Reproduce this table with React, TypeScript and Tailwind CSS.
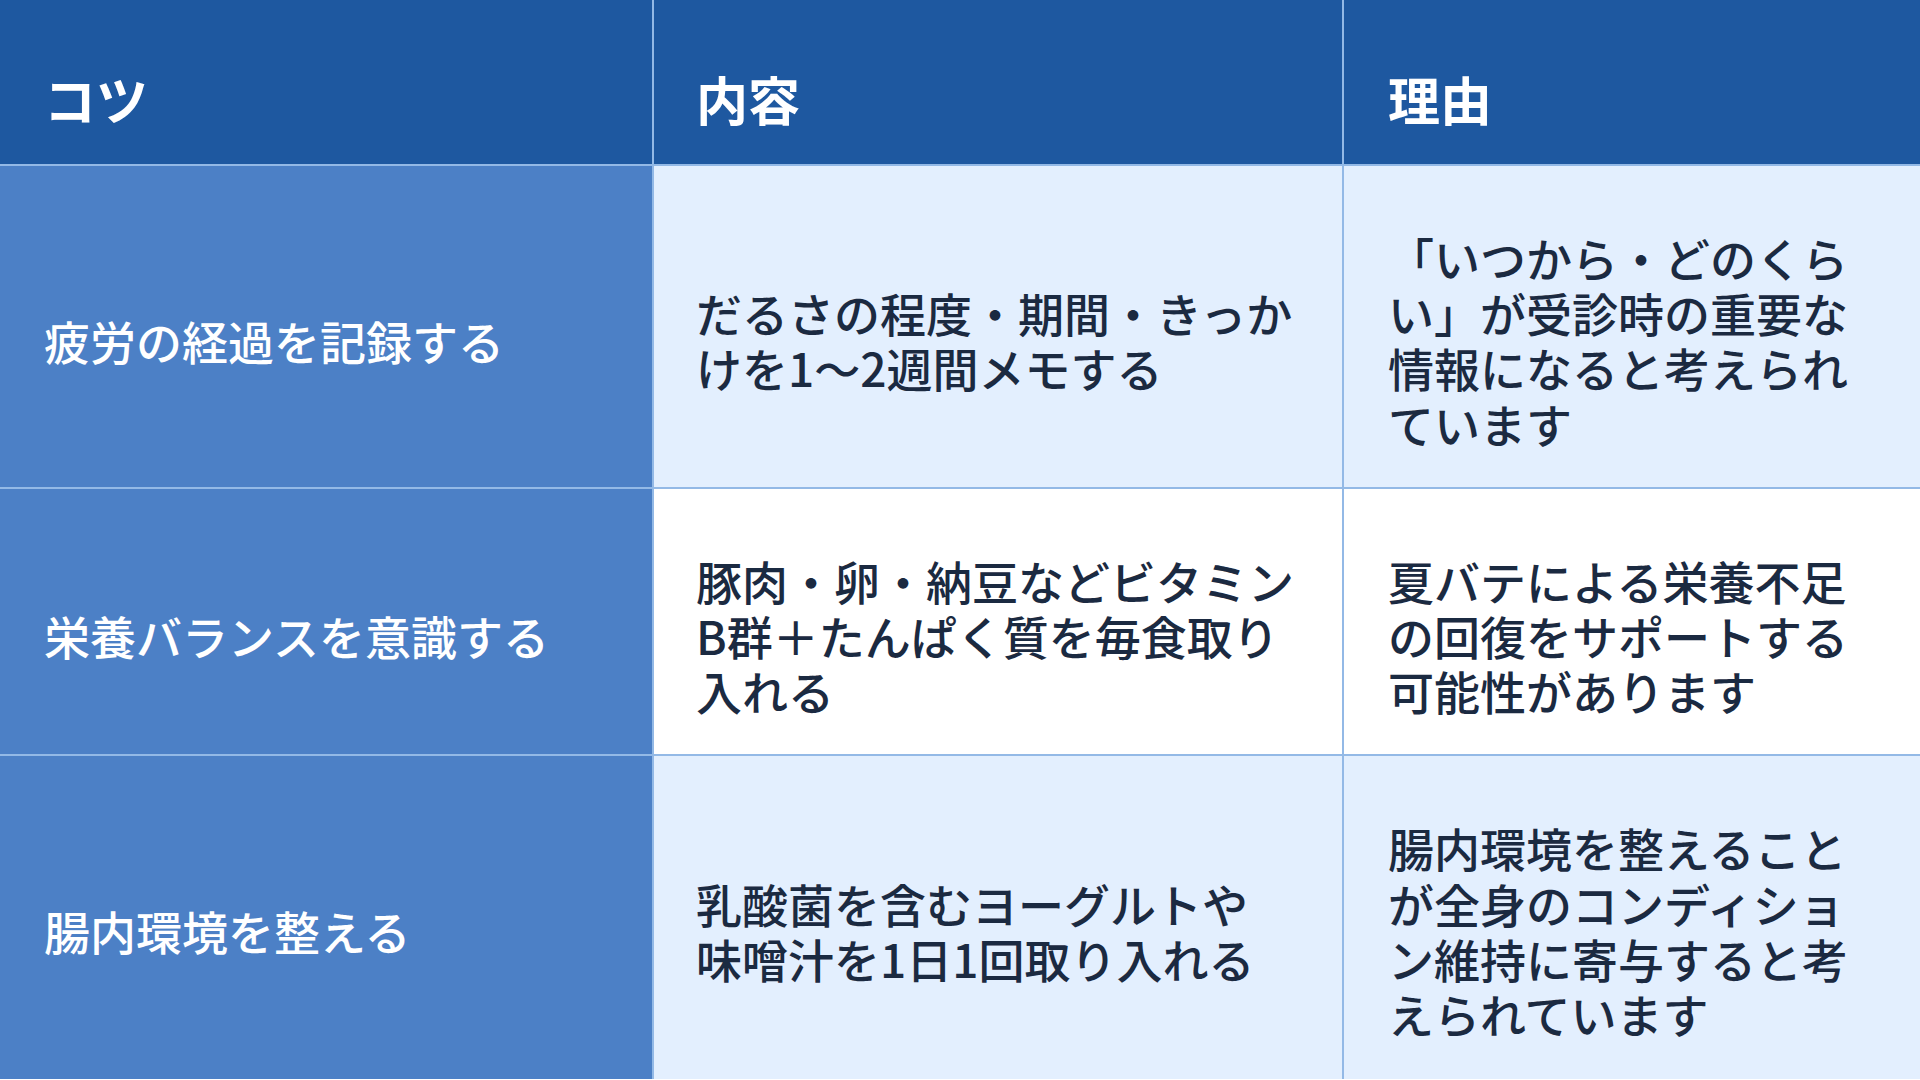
const rows = [
  {
    tip: "疲労の経過を記録する",
    detail: "だるさの程度・期間・きっかけを1〜2週間メモする",
    reason: "「いつから・どのくらい」が受診時の重要な情報になると考えられています",
    tint: "bg-[#e3effe]",
    last: false,
  },
  {
    tip: "栄養バランスを意識する",
    detail: "豚肉・卵・納豆などビタミンB群＋たんぱく質を毎食取り入れる",
    reason: "夏バテによる栄養不足の回復をサポートする可能性があります",
    tint: "bg-white",
    last: false,
  },
  {
    tip: "腸内環境を整える",
    detail: "乳酸菌を含むヨーグルトや\n味噌汁を1日1回取り入れる",
    reason: "腸内環境を整えることが全身のコンディション維持に寄与すると考えられています",
    tint: "bg-[#e3effe]",
    last: true,
  },
];

export default function App() {
  return (
    <div
      className="min-h-screen w-full bg-white"
      style={{ fontFamily: '"Noto Sans CJK JP", "Noto Sans", sans-serif' }}
    >
      <div className="grid grid-cols-[654px_690px_1fr]">
        {/* Header */}
        <div className="h-[166px] flex items-center pt-[34px] px-11 bg-[#1e58a0] border-r-2 border-b-2 border-[#93b9e6] text-white font-bold text-[52px] leading-[1.2]">
          コツ
        </div>
        <div className="h-[166px] flex items-center pt-[34px] pl-[42px] pr-11 bg-[#1e58a0] border-r-2 border-b-2 border-[#93b9e6] text-white font-bold text-[52px] leading-[1.2]">
          内容
        </div>
        <div className="h-[166px] flex items-center pt-[34px] px-11 bg-[#1e58a0] border-b-2 border-[#93b9e6] text-white font-bold text-[52px] leading-[1.2]">
          理由
        </div>

        {/* Body */}
        {rows.map((r) => (
          <div key={r.tip} className="contents">
            <div
              className={`flex items-center pl-11 pr-6 pt-[64px] ${r.last ? "pb-[38px]" : "pb-[36px] border-b-2"} bg-[#4c80c6] border-r-2 border-[#93b9e6] text-white font-medium text-[46px] leading-[1.2]`}
            >
              {r.tip}
            </div>
            <div
              className={`flex items-center pl-[42px] pr-11 pt-[64px] ${r.last ? "pb-[38px]" : "pb-[36px] border-b-2"} ${r.tint} border-r-2 border-[#93b9e6] text-[#1b2a41] font-medium text-[46px] leading-[1.2]`}
            >
              <p className="whitespace-pre-line">{r.detail}</p>
            </div>
            <div
              className={`flex items-center px-11 pt-[64px] ${r.last ? "pb-[38px]" : "pb-[36px] border-b-2"} ${r.tint} border-[#93b9e6] text-[#1b2a41] font-medium text-[46px] leading-[1.2]`}
            >
              <p>{r.reason}</p>
            </div>
          </div>
        ))}
      </div>
    </div>
  );
}
